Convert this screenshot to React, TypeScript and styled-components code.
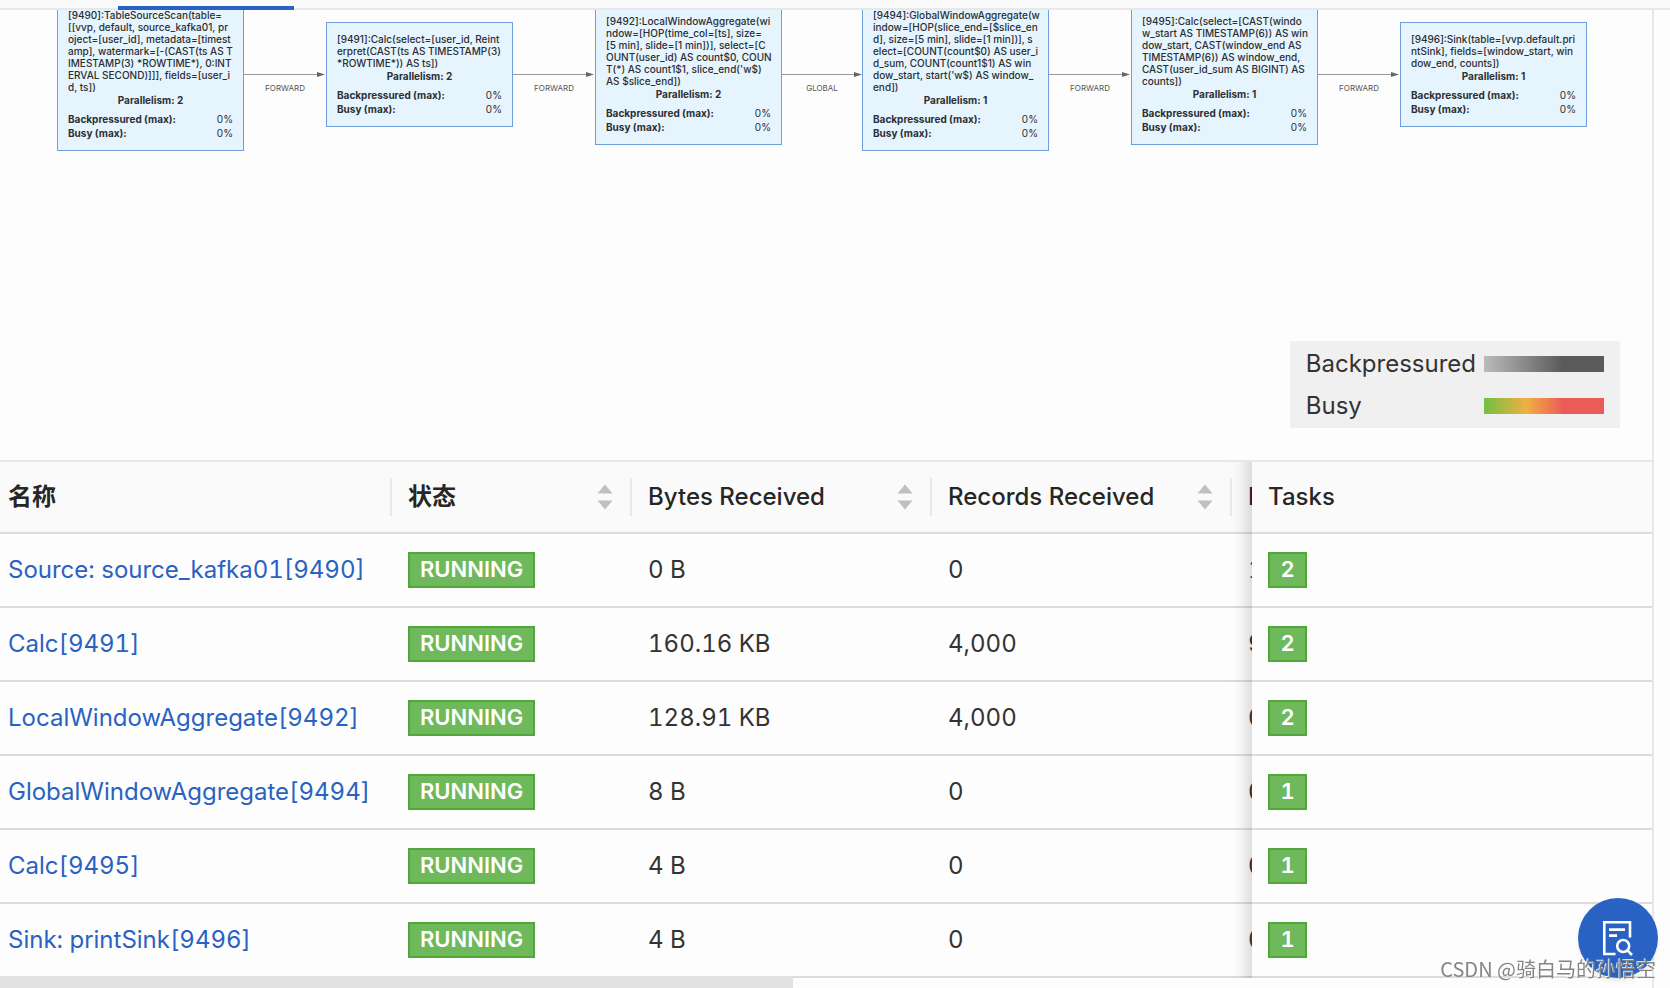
import React from "react";
import styled, { createGlobalStyle } from "styled-components";

const GlobalStyle = createGlobalStyle`
  *, *::before, *::after { box-sizing: border-box; }
  body {
    margin: 0;
    overflow: hidden;
    background: #fdfdfd;
    color: #333;
    font-family: Inter, "Noto Sans CJK SC", sans-serif;
    font-size: 24px;
    line-height: 36px;
  }
`;

const Page = styled.div`
  display: flex;
  flex-direction: column;
  height: 100vh;
  overflow: hidden;
`;

const TabBar = styled.div`
  flex: none;
  height: 10px;
  padding: 6px 0 0 118px;
  background: #fafafa;
  border-bottom: 2px solid #e8e8e8;
  position: relative;
  z-index: 1;
`;

const ActiveTab = styled.div`
  width: 176px;
  height: 4px;
  background: #2962c2;
`;

const Content = styled.main`
  flex: 1;
  min-height: 0;
  margin-right: 16px;
  border-right: 2px solid #e8e8e8;
`;

const Canvas = styled.section`
  position: relative;
  height: 450px;
  overflow: hidden;
`;

const Node = styled.article<{ $x: number; $y: number }>`
  position: absolute;
  left: ${(p) => p.$x}px;
  top: ${(p) => p.$y}px;
  width: 187px;
  padding: 10px 10px;
  border: 1px solid #6f9fdc;
  background: #e6f4fe;
  color: #2b2f33;
  font-size: 10px;
  line-height: 12px;
`;

const Plan = styled.p`
  margin: 0;
  white-space: pre;
  font-weight: 500;
`;

const Parallelism = styled.p`
  margin: 0 0 5px;
  text-align: center;
  font-weight: 700;
  line-height: 14px;
`;

const Metric = styled.div`
  display: flex;
  justify-content: space-between;
  line-height: 14px;

  strong { font-weight: 700; }
`;

const Edge = styled.div<{ $x: number }>`
  position: absolute;
  left: ${(p) => p.$x}px;
  top: 60px;
  width: 82px;
  text-align: center;
  color: #555;
  font-size: 8px;
  line-height: 16px;

  svg { display: block; }
`;

const Legend = styled.div`
  position: absolute;
  right: 32px;
  bottom: 32px;
  padding: 2px 16px 1px;
  background: #f0f0f0;
`;

const LegendRow = styled.div`
  display: flex;
  align-items: center;
  justify-content: space-between;
  gap: 8px;
  height: 42px;
`;

const Ramp = styled.span<{ $colors: string }>`
  width: 120px;
  height: 16px;
  background: linear-gradient(90deg, ${(p) => p.$colors});
`;

const TableWrap = styled.div`
  overflow: hidden;
  border-top: 2px solid #e8e8e8;
`;

const Table = styled.table`
  width: 2000px;
  min-width: 100%;
  table-layout: fixed;
  border-collapse: separate;
  border-spacing: 0;
  font-variant-numeric: tabular-nums;
`;

const HeadCell = styled.th<{ $width?: number; $bold?: boolean }>`
  width: ${(p) => (p.$width ? `${p.$width}px` : "auto")};
  height: 72px;
  padding: 0 16px;
  background: #fafafa;
  border-bottom: 2px solid #dcdcdc;
  color: #262626;
  font-weight: ${(p) => (p.$bold ? 600 : 500)};
  text-align: left;

  &:first-child { padding-left: 8px; }
`;

const HeadContent = styled.div<{ $divided?: boolean }>`
  display: flex;
  align-items: center;
  justify-content: space-between;
  height: 38px;
  margin-right: -16px;
  padding-right: 17px;
  border-right: ${(p) => (p.$divided ? "2px solid #e8e8e8" : "none")};
`;

const SortButton = styled.button`
  display: flex;
  padding: 0;
  border: 0;
  background: none;
`;

const Cell = styled.td`
  height: 74px;
  padding: 0 16px;
  background: #fdfdfd;
  border-bottom: 2px solid #dcdcdc;

  &:first-child { padding-left: 8px; }
`;

const pinned = `
  position: sticky;
  right: 0;

  &::before {
    content: "";
    position: absolute;
    top: 0;
    bottom: -2px;
    left: -60px;
    width: 60px;
    box-shadow: inset -20px 0 16px -16px rgba(0, 0, 0, 0.18);
  }
`;

const PinnedHeadCell = styled(HeadCell)`${pinned}`;
const PinnedCell = styled(Cell)`${pinned}`;

const VertexLink = styled.a`
  color: #2962c2;
  text-decoration: none;
`;

const Tag = styled.span`
  display: block;
  width: fit-content;
  min-width: 39px;
  height: 36px;
  padding: 0 10px;
  border: 2px solid #4fa837;
  background: #6fb85b;
  color: #fff;
  font-size: 22px;
  font-weight: 600;
  line-height: 31px;
  text-align: center;
`;

const ScrollTrack = styled.div`
  position: relative;
  height: 12px;
  margin-top: -2px;
`;

const ScrollThumb = styled.div`
  width: 48%;
  height: 12px;
  background: #e1e1e1;
`;

const FloatingButton = styled.button`
  position: fixed;
  right: 12px;
  bottom: 10px;
  display: flex;
  align-items: center;
  justify-content: center;
  width: 80px;
  height: 80px;
  padding: 0;
  border: 0;
  border-radius: 50%;
  background: #2962c2;
  box-shadow: 0 4px 4px rgba(0, 0, 0, 0.06);
`;

const Watermark = styled.div`
  position: fixed;
  right: 14px;
  bottom: 5px;
  color: #858585;
  font-family: "Noto Sans CJK SC", sans-serif;
  font-size: 20px;
  line-height: 28px;
  text-shadow: -1px -1px 0 rgba(255, 255, 255, 0.8);
  white-space: nowrap;
`;

const nodes = [
  {
    x: 57, y: -12, parallelism: 2,
    plan: "[9490]:TableSourceScan(table=\n[[vvp, default, source_kafka01, pr\noject=[user_id], metadata=[timest\namp], watermark=[-(CAST(ts AS T\nIMESTAMP(3) *ROWTIME*), 0:INT\nERVAL SECOND)]]], fields=[user_i\nd, ts])",
  },
  {
    x: 326, y: 12, parallelism: 2,
    plan: "[9491]:Calc(select=[user_id, Reint\nerpret(CAST(ts AS TIMESTAMP(3)\n*ROWTIME*)) AS ts])",
  },
  {
    x: 595, y: -6, parallelism: 2,
    plan: "[9492]:LocalWindowAggregate(wi\nndow=[HOP(time_col=[ts], size=\n[5 min], slide=[1 min])], select=[C\nOUNT(user_id) AS count$0, COUN\nT(*) AS count1$1, slice_end('w$)\nAS $slice_end])",
  },
  {
    x: 862, y: -12, parallelism: 1,
    plan: "[9494]:GlobalWindowAggregate(w\nindow=[HOP(slice_end=[$slice_en\nd], size=[5 min], slide=[1 min])], s\nelect=[COUNT(count$0) AS user_i\nd_sum, COUNT(count1$1) AS win\ndow_start, start('w$) AS window_\nend])",
  },
  {
    x: 1131, y: -6, parallelism: 1,
    plan: "[9495]:Calc(select=[CAST(windo\nw_start AS TIMESTAMP(6)) AS win\ndow_start, CAST(window_end AS\nTIMESTAMP(6)) AS window_end,\nCAST(user_id_sum AS BIGINT) AS\ncounts])",
  },
  {
    x: 1400, y: 12, parallelism: 1,
    plan: "[9496]:Sink(table=[vvp.default.pri\nntSink], fields=[window_start, win\ndow_end, counts])",
  },
];

const edges = [
  { x: 244, label: "FORWARD" },
  { x: 513, label: "FORWARD" },
  { x: 781, label: "GLOBAL" },
  { x: 1049, label: "FORWARD" },
  { x: 1318, label: "FORWARD" },
];

const rows = [
  { name: "Source: source_kafka01[9490]", bytes: "0 B", records: "0", sent: "1", tasks: 2 },
  { name: "Calc[9491]", bytes: "160.16 KB", records: "4,000", sent: "9", tasks: 2 },
  { name: "LocalWindowAggregate[9492]", bytes: "128.91 KB", records: "4,000", sent: "0", tasks: 2 },
  { name: "GlobalWindowAggregate[9494]", bytes: "8 B", records: "0", sent: "0", tasks: 1 },
  { name: "Calc[9495]", bytes: "4 B", records: "0", sent: "0", tasks: 1 },
  { name: "Sink: printSink[9496]", bytes: "4 B", records: "0", sent: "0", tasks: 1 },
];

function Sorter() {
  return (
    <SortButton type="button">
      <svg width="16" height="26" viewBox="0 0 16 26" fill="#bfbfbf">
        <path d="M8 0.5 15.5 9.5H0.5Z" />
        <path d="M8 25.5 15.5 16.5H0.5Z" />
      </svg>
    </SortButton>
  );
}

export default function App() {
  return (
    <Page>
      <GlobalStyle />
      <TabBar>
        <ActiveTab />
      </TabBar>
      <Content>
        <Canvas>
          {edges.map((e) => (
            <Edge key={e.x} $x={e.x}>
              <svg width="82" height="10" viewBox="0 0 82 10">
                <path d="M0 4.5H75" stroke="#999" />
                <path d="M73 2 81 4.5 73 7Z" fill="#666" />
              </svg>
              {e.label}
            </Edge>
          ))}
          {nodes.map((n) => (
            <Node key={n.x} $x={n.x} $y={n.y}>
              <Plan>{n.plan}</Plan>
              <Parallelism>Parallelism: {n.parallelism}</Parallelism>
              <Metric><strong>Backpressured (max):</strong><span>0%</span></Metric>
              <Metric><strong>Busy (max):</strong><span>0%</span></Metric>
            </Node>
          ))}
          <Legend>
            <LegendRow>
              Backpressured
              <Ramp $colors="#bbb, #5a5a5a 66%, #5a5a5a" />
            </LegendRow>
            <LegendRow>
              Busy
              <Ramp $colors="#73bf44, #efb043 35%, #eb5c58 66%, #eb5c58" />
            </LegendRow>
          </Legend>
        </Canvas>
        <TableWrap>
          <Table>
            <thead>
              <tr>
                <HeadCell $width={392} $bold><HeadContent $divided>名称</HeadContent></HeadCell>
                <HeadCell $width={240} $bold><HeadContent $divided>状态<Sorter /></HeadContent></HeadCell>
                <HeadCell $width={300}><HeadContent $divided>Bytes Received<Sorter /></HeadContent></HeadCell>
                <HeadCell $width={300}><HeadContent $divided>Records Received<Sorter /></HeadContent></HeadCell>
                <HeadCell>B</HeadCell>
                <PinnedHeadCell $width={400}>Tasks</PinnedHeadCell>
              </tr>
            </thead>
            <tbody>
              {rows.map((r) => (
                <tr key={r.name}>
                  <Cell><VertexLink href="#">{r.name}</VertexLink></Cell>
                  <Cell><Tag>RUNNING</Tag></Cell>
                  <Cell>{r.bytes}</Cell>
                  <Cell>{r.records}</Cell>
                  <Cell>{r.sent}</Cell>
                  <PinnedCell><Tag>{r.tasks}</Tag></PinnedCell>
                </tr>
              ))}
            </tbody>
          </Table>
        </TableWrap>
        <ScrollTrack>
          <ScrollThumb />
        </ScrollTrack>
      </Content>
      <FloatingButton type="button">
        <svg width="32" height="36" viewBox="0 0 32 36" fill="none" stroke="#fff" strokeWidth="2.6">
          <path d="M13.5 34H2.3V2.3H28V17.5" />
          <path d="M7 9.6H23M7 15.6H15" />
          <circle cx="21.2" cy="26" r="6" />
          <path d="M25.2 30.2 30 35" />
        </svg>
      </FloatingButton>
      <Watermark>CSDN @骑白马的孙悟空</Watermark>
    </Page>
  );
}
